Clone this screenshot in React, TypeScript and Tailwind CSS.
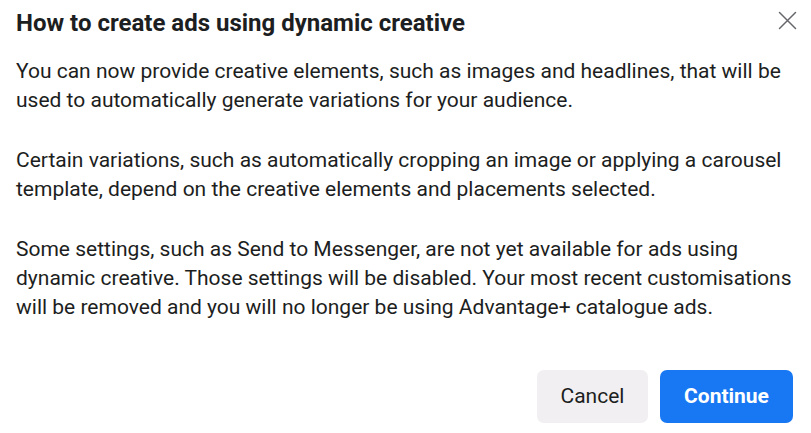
import React from "react";

export default function App() {
  return (
    <div
      className="w-[811px] h-[433px] bg-white flex flex-col text-[#1c1e21]"
      style={{ fontFamily: "Roboto, 'Liberation Sans', sans-serif" }}
    >
      <div className="flex items-start justify-between pl-4 pr-[14px] pt-[8px]">
        <h1 className="text-[24px] leading-[30px] font-bold">How to create ads using dynamic creative</h1>
        <button className="mt-[3px] w-[19px] h-[19px] flex items-center justify-center text-[#65676b]">
          <svg width="19" height="19" viewBox="0 0 19 19" fill="none" stroke="currentColor" strokeWidth="1.5" strokeLinecap="round">
            <path d="M1.5 1.5 L17.5 17.5 M17.5 1.5 L1.5 17.5" />
          </svg>
        </button>
      </div>
      <div className="pl-4 pr-4 pt-[18.5px] text-[21px] leading-[29px] text-[#1c1e21]">
        <p>
          You can now provide creative elements, such as images and headlines, that will be used to automatically generate variations for your audience.
        </p>
        <p className="mt-[31px]">
          Certain variations, such as automatically cropping an image or applying a carousel template, depend on the creative elements and placements selected.
        </p>
        <p className="mt-[31px]">
          Some settings, such as Send to Messenger, are not yet available for ads using dynamic creative. Those settings will be disabled. Your most recent customisations will be removed and you will no longer be using Advantage+ catalogue ads.
        </p>
      </div>
      <div className="mt-auto flex justify-end gap-3 pr-[18px] pb-[10px]">
        <button className="w-[111px] h-[53px] rounded-[7px] bg-[#f1eff2] text-[21px] text-[#1c1e21]">Cancel</button>
        <button className="w-[133px] h-[53px] rounded-[7px] bg-[#1877f2] text-[21px] font-bold text-white">Continue</button>
      </div>
    </div>
  );
}
